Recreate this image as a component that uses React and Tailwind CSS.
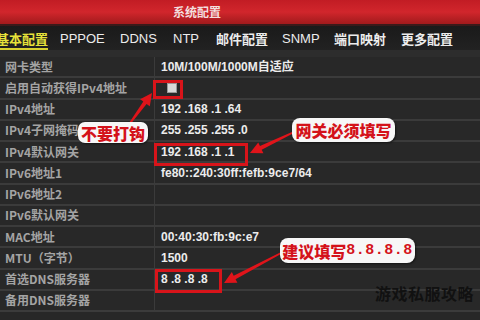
import React from "react";

const rows = [
  ["网卡类型", "10M/100M/1000M自适应"],
  ["启用自动获得IPv4地址", "__checkbox"],
  ["IPv4地址", "192 .168 .1 .64"],
  ["IPv4子网掩码", "255 .255 .255 .0"],
  ["IPv4默认网关", "192 .168 .1 .1"],
  ["IPv6地址1", "fe80::240:30ff:fefb:9ce7/64"],
  ["IPv6地址2", ""],
  ["IPv6默认网关", ""],
  ["MAC地址", "00:40:30:fb:9c:e7"],
  ["MTU（字节）", "1500"],
  ["首选DNS服务器", "8 .8 .8 .8"],
  ["备用DNS服务器", ""],
];

const tabs = [
  ["基本配置", "w-[64px] ml-[-4px]", true],
  ["PPPOE", "w-[60px]", false],
  ["DDNS", "w-[53px]", false],
  ["NTP", "w-[43px]", false],
  ["邮件配置", "w-[66px]", false],
  ["SNMP", "w-[52px]", false],
  ["端口映射", "w-[67px]", false],
  ["更多配置", "w-[60px]", false],
];

function Arrow({ x1, y1, x2, y2 }) {
  const dx = x2 - x1;
  const dy = y2 - y1;
  const len = Math.hypot(dx, dy);
  const ux = dx / len;
  const uy = dy / len;
  const px = -uy;
  const py = ux;
  const headL = 12;
  const headW = 6;
  const bx = x2 - ux * headL;
  const by = y2 - uy * headL;
  const pts = [
    [x1 + px * 0.8, y1 + py * 0.8],
    [bx + px * 2, by + py * 2],
    [bx + px * headW, by + py * headW],
    [x2, y2],
    [bx - px * headW, by - py * headW],
    [bx - px * 2, by - py * 2],
    [x1 - px * 0.8, y1 - py * 0.8],
  ]
    .map((p) => p.join(","))
    .join(" ");
  return <polygon points={pts} fill="#e0141a" />;
}

const cjk = { fontFamily: '"Noto Sans CJK SC", sans-serif' };

export default function App() {
  return (
    <div
      className="relative w-[480px] h-[320px] overflow-hidden bg-[#272727]"
      style={{ fontFamily: '"Liberation Sans", "Noto Sans CJK SC", sans-serif' }}
    >
      {/* header */}
      <div className="h-[24px] bg-gradient-to-b from-[#c21c24] via-[#d1262c] to-[#a11a1c] flex items-center pl-[173px]">
        <span className="text-[12px] font-bold text-[#f3dede] leading-none" style={cjk}>
          系统配置
        </span>
      </div>
      <div className="h-[2px] bg-[#3a1a1a]" />
      {/* tabs */}
      <div className="h-[24px] bg-gradient-to-b from-[#1a1a1a] to-[#222222] flex items-center">
        {tabs.map(([t, w, active]) => (
          <div key={t} className={`${w} shrink-0 h-full flex items-center`}>
            <span
              className={
                active
                  ? "text-[13px] font-bold text-[#e6e23a] border-b-2 border-[#d8d030] leading-[18px] mt-[3px] whitespace-nowrap"
                  : "text-[13px] text-[#ececec] font-bold leading-none whitespace-nowrap"
              }
              style={
                /[A-Z]/.test(t)
                  ? { fontFamily: '"Liberation Sans", sans-serif', fontWeight: 400 }
                  : cjk
              }
            >
              {t}
            </span>
          </div>
        ))}
      </div>
      <div className="h-[7px] bg-[#2d2d2d]" />
      {/* table */}
      <div className="flex flex-col">
        {rows.map(([label, value]) => (
          <div
            key={label}
            className="h-[21.25px] flex border-b-2 border-[#3b3b3b] bg-[#282828]"
          >
            <div
              className="w-[155px] shrink-0 border-r border-[#3b3b3b] flex items-center pl-[5px] text-[12px] text-[#a4a4a4] font-bold whitespace-nowrap"
              style={cjk}
            >
              {label}
            </div>
            <div className="flex-1 flex items-center pl-[6px] text-[12px] text-[#ececec]">
              {value === "__checkbox" ? (
                <div className="ml-[6px] w-[10px] h-[10px] bg-[#d9d9d9] border border-[#999]" />
              ) : (
                <span className="font-bold whitespace-nowrap">{value}</span>
              )}
            </div>
          </div>
        ))}
      </div>

      {/* annotations: red boxes */}
      <div className="absolute left-[153px] top-[80px] w-[30px] h-[19px] border-[3px] border-[#d8141a]" />
      <div className="absolute left-[154px] top-[143px] w-[94px] h-[23px] border-[3px] border-[#d8141a]" />
      <div className="absolute left-[155px] top-[269px] w-[67px] h-[24px] border-[3px] border-[#d8141a]" />

      {/* arrows */}
      <svg className="absolute left-0 top-0" width="480" height="320">
        <Arrow x1={128} y1={126} x2={152} y2={93} />
        <Arrow x1={294} y1={132} x2={250} y2={153} />
        <Arrow x1={281} y1={253} x2={224} y2={283} />
      </svg>

      {/* bubbles */}
      <div className="absolute left-[78px] top-[122px] w-[70px] h-[21px] rounded-[7px] bg-[#f7f7f7] shadow-[1px_1px_2px_rgba(0,0,0,0.5)] flex items-center justify-center">
        <span className="text-[16px] font-black text-[#d4121a] leading-none whitespace-nowrap" style={cjk}>
          不要打钩
        </span>
      </div>
      <div className="absolute left-[292px] top-[118px] w-[103px] h-[24px] rounded-[8px] bg-[#f7f7f7] shadow-[1px_1px_2px_rgba(0,0,0,0.5)] flex items-center justify-center">
        <span className="text-[16px] font-black text-[#d4121a] leading-none whitespace-nowrap" style={cjk}>
          网关必须填写
        </span>
      </div>
      <div className="absolute left-[280px] top-[238px] w-[135px] h-[25px] rounded-[8px] bg-[#f7f7f7] shadow-[1px_1px_2px_rgba(0,0,0,0.5)] flex items-center justify-center whitespace-nowrap">
        <span className="shrink-0 text-[16px] font-black text-[#d4121a] leading-none" style={cjk}>
          建议填写
        </span>
        <span
          className="shrink-0 text-[15px] font-bold text-[#d4121a] leading-none tracking-[0.5px]"
          style={{ fontFamily: '"Liberation Mono", monospace' }}
        >
          8.8.8.8
        </span>
      </div>

      {/* watermark */}
      <div
        className="absolute left-[375px] top-[285px] text-[16px] font-bold leading-none tracking-[0.5px] whitespace-nowrap"
        style={{ ...cjk, color: "#111111" }}
      >
        游戏私服攻略
      </div>
    </div>
  );
}
